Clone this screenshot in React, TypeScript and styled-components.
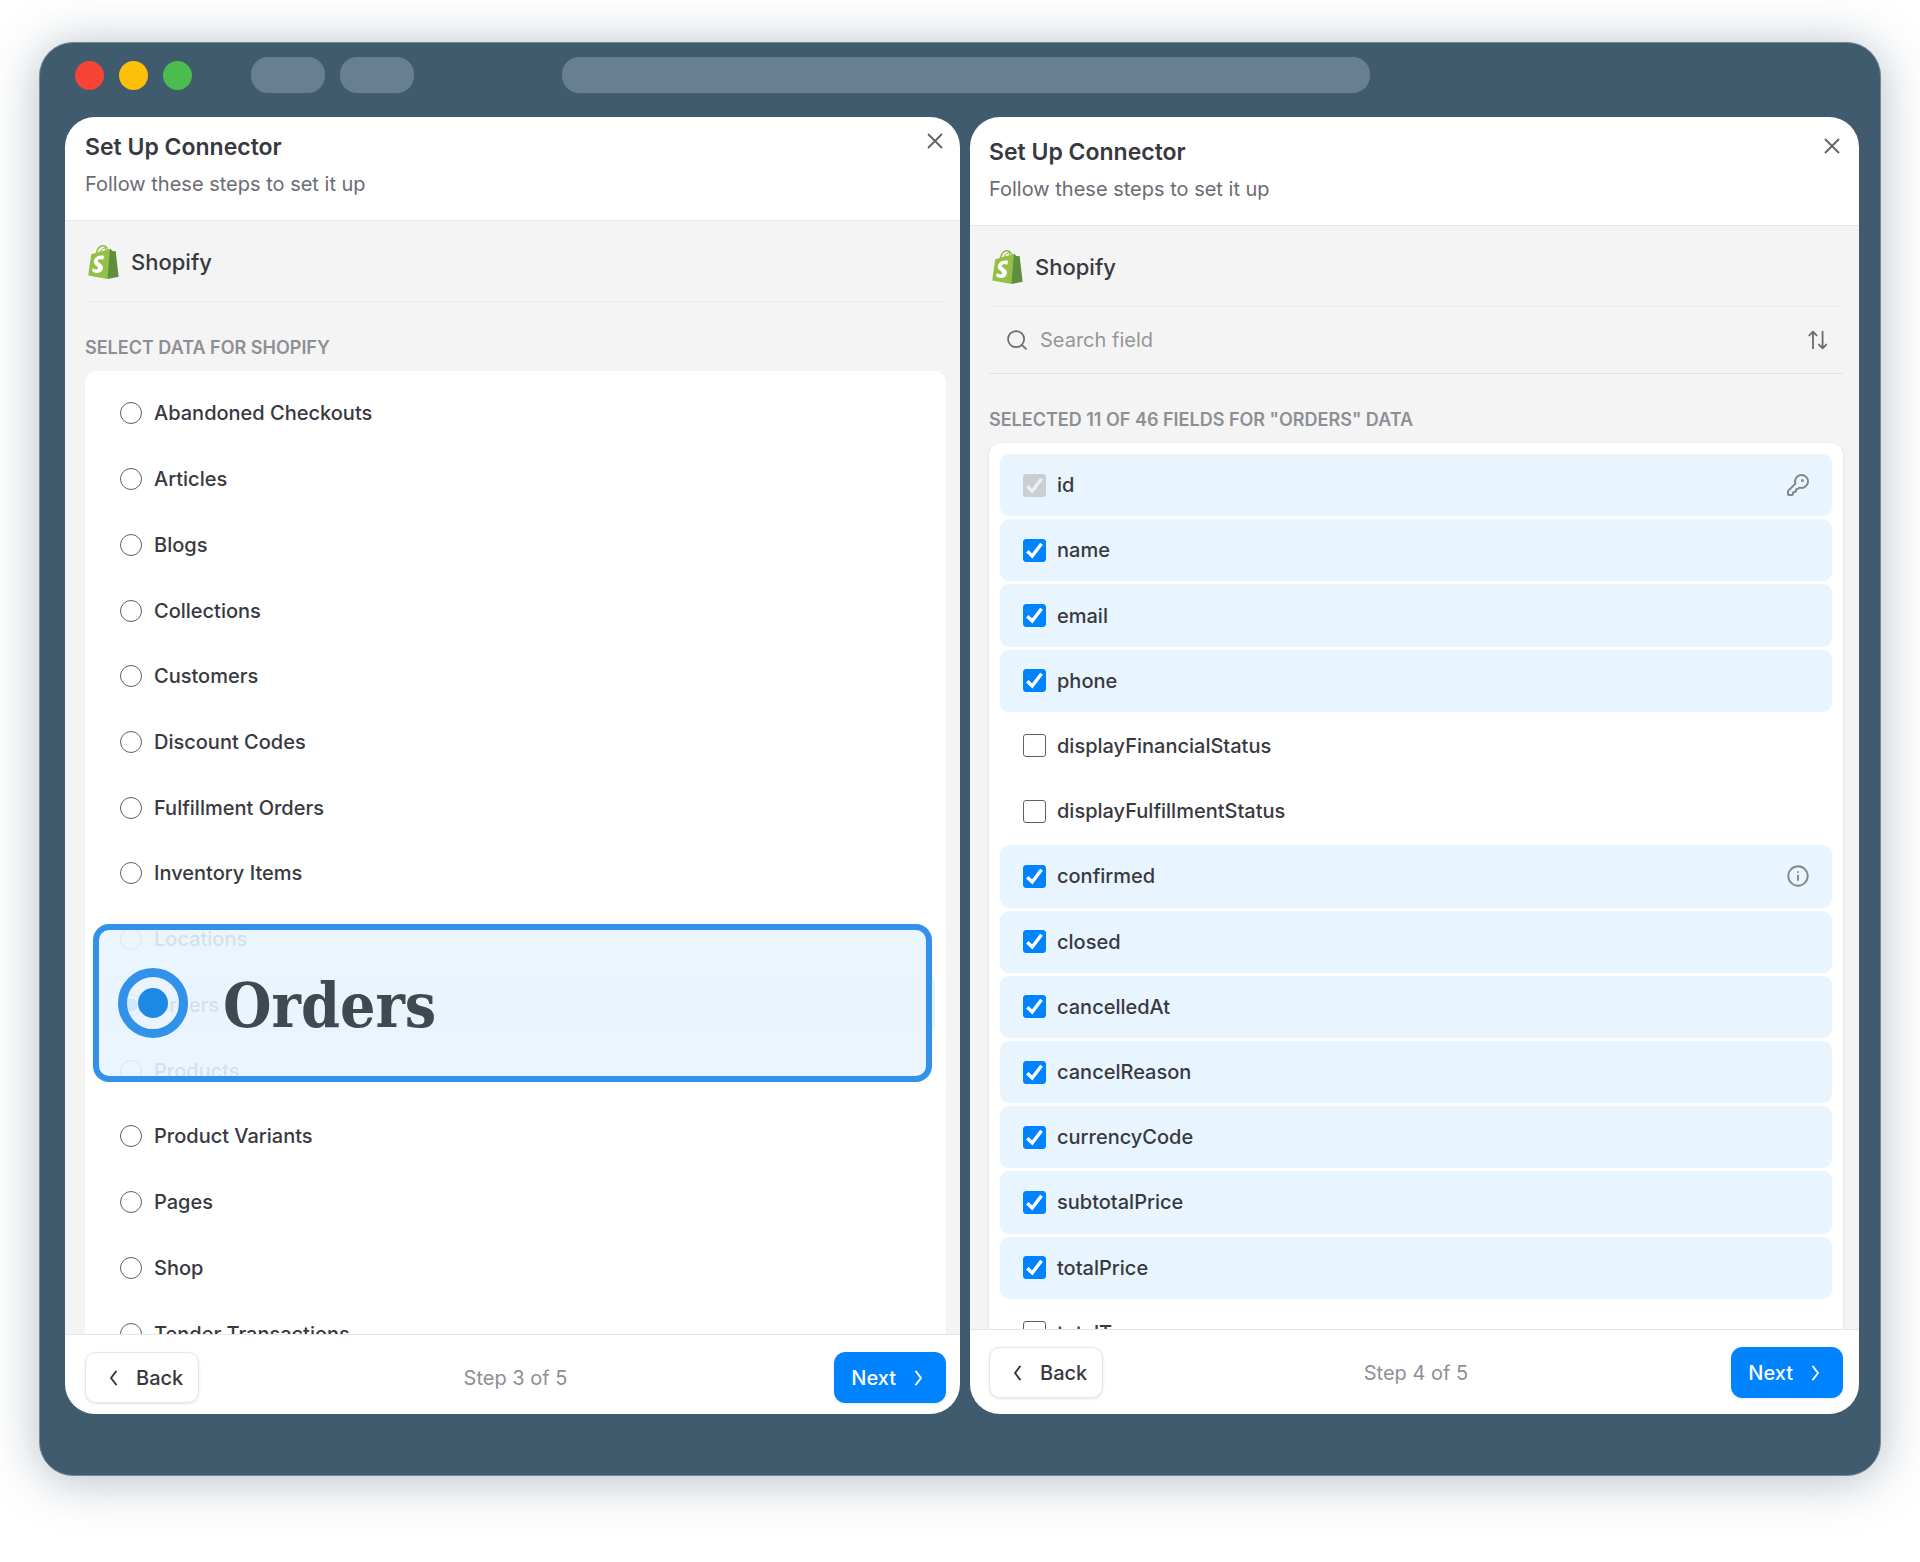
import React from "react";
import styled, { createGlobalStyle, css } from "styled-components";

const GlobalStyle = createGlobalStyle`
  *, *::before, *::after { box-sizing: border-box; }
  body {
    margin: 0;
    background: #ffffff;
    color: #38393f;
    font-family: Inter, "Liberation Sans", sans-serif;
    font-size: 20px;
    line-height: 28px;
  }
  h2, h3, p, ul { margin: 0; padding: 0; }
  button, input { font: inherit; color: inherit; }
`;

const Page = styled.main`
  display: flex;
  height: 100vh;
  padding: 42px 39px 86px;
`;

const Browser = styled.div`
  display: flex;
  flex: 1;
  flex-direction: column;
  min-width: 0;
  padding: 0 21px 61px 25px;
  border: 1px solid #74889a;
  border-radius: 34px;
  background: #405b6d;
  box-shadow: 0 4px 50px rgba(63, 91, 110, 0.4);
`;

const BrowserBar = styled.div`
  display: flex;
  align-items: center;
  height: 74px;
  padding: 0 489px 10px 10px;
`;

const Lights = styled.div`
  display: flex;
  gap: 15px;
  margin-right: 59px;
`;

const Light = styled.span<{ $color: string }>`
  width: 29px;
  height: 29px;
  border-radius: 50%;
  background: ${(p) => p.$color};
`;

const Tabs = styled.div`
  display: flex;
  gap: 15px;
  margin-right: 148px;
`;

const Tab = styled.span`
  width: 74px;
  height: 36px;
  border-radius: 17px;
  background: #687f93;
`;

const AddressBar = styled.span`
  flex: 1;
  height: 36px;
  border-radius: 17px;
  background: #687f93;
`;

const Panels = styled.div`
  display: grid;
  flex: 1;
  grid-template-columns: 895fr 889fr;
  gap: 10px;
  min-height: 0;
`;

const Panel = styled.section`
  display: flex;
  flex-direction: column;
  min-width: 0;
  min-height: 0;
  overflow: hidden;
  border-radius: 30px;
  background: #ffffff;
`;

const PanelHeader = styled.header<{ $roomy?: boolean }>`
  display: flex;
  flex: none;
  align-items: flex-start;
  justify-content: space-between;
  height: ${(p) => (p.$roomy ? 109 : 104)}px;
  padding: ${(p) => (p.$roomy ? "21px 15px 0 19px" : "16px 13px 0 20px")};
  border-bottom: 1px solid #e6e6e8;
`;

const PanelTitle = styled.h2`
  font-size: 23px;
  font-weight: 600;
  line-height: 28px;
`;

const PanelSubtitle = styled.p`
  margin-top: 9px;
  color: #6b6c73;
`;

const CloseButton = styled.button`
  display: flex;
  align-items: center;
  justify-content: center;
  width: 24px;
  height: 16px;
  padding: 0;
  border: 0;
  background: none;
  color: #5f6068;
`;

const PanelBody = styled.div<{ $roomy?: boolean }>`
  display: flex;
  flex: 1;
  flex-direction: column;
  min-height: 0;
  overflow: hidden;
  padding: ${(p) => (p.$roomy ? "0 16px 0 19px" : "0 14px 0 20px")};
  background: #f4f4f4;
`;

const Source = styled.div`
  display: flex;
  flex: none;
  align-items: center;
  gap: 12px;
  height: 81px;
  padding: 1px 0 0 3px;
  border-bottom: 1px solid #e9e9ea;
`;

const SourceName = styled.h3`
  font-size: 22px;
  font-weight: 500;
  line-height: 28px;
`;

const SearchRow = styled.div`
  display: flex;
  flex: none;
  align-items: center;
  gap: 12px;
  height: 67px;
  padding: 0 14px 0 17px;
  border-bottom: 1px solid #e3e3e5;
  color: #6b6c73;
`;

const SearchInput = styled.input`
  flex: 1;
  min-width: 0;
  padding: 0;
  border: 0;
  outline: 0;
  background: none;
  &::placeholder { color: #95969b; opacity: 1; }
`;

const IconButton = styled.button`
  display: flex;
  padding: 0;
  border: 0;
  background: none;
`;

const SectionLabel = styled.h3`
  flex: none;
  padding: 34px 0 11px;
  color: #8e8f94;
  font-size: 18px;
  font-weight: 600;
  line-height: 24px;
`;

const Card = styled.div<{ $raised?: boolean }>`
  position: relative;
  flex: none;
  padding: 11px;
  border-radius: 12px;
  background: #ffffff;
  ${(p) => p.$raised && css`box-shadow: 0 1px 3px rgba(0, 0, 0, 0.12);`}
`;

const List = styled.ul<{ $height: number }>`
  display: grid;
  grid-auto-rows: 1fr;
  gap: 3px;
  height: ${(p) => p.$height}px;
  list-style: none;
`;

const Option = styled.label<{ $selected?: boolean }>`
  display: flex;
  align-items: center;
  gap: 11px;
  height: 100%;
  padding: 0 22px 0 23px;
  border-radius: 9px;
  background: ${(p) => (p.$selected ? "#e8f5ff" : "transparent")};
  font-weight: 500;
`;

const OptionText = styled.span`
  flex: 1;
`;

const OptionIcon = styled.span`
  display: flex;
  color: #85868c;
`;

const Radio = styled.input`
  appearance: none;
  flex: none;
  width: 22px;
  height: 22px;
  margin: 0 1px;
  border: 1px solid #606167;
  border-radius: 50%;
  background: #ffffff;
  &:checked {
    border-color: #0083ff;
    background: radial-gradient(circle, #0083ff 0 6px, #ffffff 7px);
  }
`;

const CheckWrap = styled.span`
  display: grid;
  flex: none;
  & > * { grid-area: 1 / 1; }
`;

const Checkbox = styled.input`
  appearance: none;
  width: 23px;
  height: 23px;
  margin: 0;
  border: 1px solid #606167;
  border-radius: 3px;
  background: #ffffff;
  &:checked { border-color: #0083ff; background: #0083ff; }
  &:checked:disabled { border-color: #cbcfd2; background: #cbcfd2; }
`;

const Callout = styled.label`
  position: absolute;
  top: 553px;
  right: 14px;
  left: 8px;
  display: flex;
  align-items: center;
  gap: 35px;
  height: 158px;
  padding: 0 19px;
  border: 6px solid #3291e9;
  border-radius: 16px;
  background: rgba(232, 244, 255, 0.89);
`;

const CalloutRadio = styled.input`
  appearance: none;
  display: grid;
  flex: none;
  place-items: center;
  width: 70px;
  height: 70px;
  margin: 0;
  border: 9px solid #3291e9;
  border-radius: 50%;
  &::before {
    content: "";
    width: 30px;
    height: 30px;
    border-radius: 50%;
    background: #1e88e5;
  }
`;

const CalloutText = styled.span`
  padding-top: 6px;
  color: #3f4a50;
  font-family: "DejaVu Serif Condensed", "DejaVu Serif", serif;
  font-size: 62px;
  font-weight: 700;
  line-height: 72px;
`;

const PanelFooter = styled.footer<{ $roomy?: boolean }>`
  display: grid;
  flex: none;
  grid-template-columns: 1fr auto 1fr;
  align-items: center;
  padding: ${(p) => (p.$roomy ? "17px 16px 16px 19px" : "17px 14px 11px 20px")};
  border-top: 1px solid #e6e6e8;
`;

const StepText = styled.p`
  color: #8e8f94;
`;

const StepButton = styled.button<{ $primary?: boolean }>`
  display: flex;
  align-items: center;
  justify-self: ${(p) => (p.$primary ? "end" : "start")};
  gap: 10px;
  height: 51px;
  padding: 0 15px 0 16px;
  border: 1px solid ${(p) => (p.$primary ? "#0083ff" : "#e6e6e8")};
  border-radius: 11px;
  background: ${(p) => (p.$primary ? "#0083ff" : "#ffffff")};
  box-shadow: 0 1px 3px rgba(0, 0, 0, 0.1);
  color: ${(p) => (p.$primary ? "#ffffff" : "#38393f")};
  font-weight: 500;
`;

const Stroke = ({ size, width = 2, children }: { size: number; width?: number; children: React.ReactNode }) => (
  <svg width={size} height={size} viewBox="0 0 24 24" fill="none" stroke="currentColor" strokeWidth={width}
    strokeLinecap="round" strokeLinejoin="round" aria-hidden="true">
    {children}
  </svg>
);

const CloseIcon = () => <Stroke size={24} width={1.8}><path d="M5.5 5.5l13 13M18.5 5.5l-13 13" /></Stroke>;
const SearchIcon = () => <Stroke size={22} width={1.9}><circle cx="11" cy="11" r="8.8" /><path d="M17.5 17.5L21.8 21.8" /></Stroke>;
const SortIcon = () => (
  <Stroke size={22} width={2}><path d="M6.5 21V3M2.5 7L6.500 3L10.5 7M17 3v18M13 17l4 4l4-4" /></Stroke>
);
const KeyIcon = () => (
  <Stroke size={24} width={2}>
    <path d="M2.586 17.414A2 2 0 0 0 2 18.828V21a1 1 0 0 0 1 1h3a1 1 0 0 0 1-1v-1a1 1 0 0 1 1-1h1a1 1 0 0 0 1-1v-1a1 1 0 0 1 1-1h.172a2 2 0 0 0 1.414-.586l.814-.814a6.500 6.500 0 1 0-4-4z" />
    <circle cx="16.500" cy="7.500" r=".5" fill="currentColor" />
  </Stroke>
);
const InfoIcon = () => (
  <Stroke size={24} width={1.9}><circle cx="12" cy="12" r="9.700" /><path d="M12 11.500v4.500M12 8v.1" /></Stroke>
);
const ChevronLeft = () => <Stroke size={24} width={2}><path d="M14 5.500l-5 6.500l5 6.500" /></Stroke>;
const ChevronRight = () => <Stroke size={24} width={2}><path d="M10 5.500l5 6.500l-5 6.500" /></Stroke>;

const Tick = ({ muted }: { muted?: boolean }) => (
  <svg width="23" height="23" viewBox="0 0 23 23" fill="none" stroke={muted ? "#eef0f1" : "#ffffff"} strokeWidth="3.4" aria-hidden="true">
    <path d="M4.300 12.300L9.200 17L18.500 4.700" />
  </svg>
);

const ShopifyLogo = () => (
  <svg width="31" height="34" viewBox="3 0 104 124" preserveAspectRatio="none" aria-hidden="true">
    <path fill="#95bf47" d="M95.900 23.900c-.1-.6-.6-1-1.100-1-.5 0-9.300-.2-9.300-.2s-7.400-7.200-8.100-7.900c-.7-.7-2.200-.5-2.700-.3L71 15.600c-.6-2-1.500-4.400-2.800-6.800C64.300 2.900 59.200 0 53.300 0 43.100 0 33 8.200 28.700 29.100l-11.500 3.600c-3.200 1-3.300 1.100-3.700 4.100L3.700 111.600l64.900 12.200z" />
    <path fill="#5e8e3e" d="M94.800 22.900c-.5 0-9.300-.2-9.300-.2s-7.400-7.200-8.100-7.900c-.3-.3-.6-.4-1-.5l-7.800 109.500 37.500-8.100S96 24.300 95.900 23.900c-.1-.6-.6-1-1.100-1z" />
    <path fill="#f4f4f4" d="M34.500 27.300C38 13.500 46 5.500 53.300 5.500c2.500 0 4.300 1.200 5.800 3.400C50 11.500 45 17 42 25zM46.800 23.500c2.600-6.500 6.700-10.500 13.600-10.600.6 2 .9 4.400.9 6.200zM65 10.500c1.500 2 2.100 4.200 2.600 6.200l-3 .9c0-2.700-.2-5-.6-7.300z" />
    <path fill="#ffffff" d="M58 39.900l-4.800 14.300s-4.200-2.300-9.400-2.300c-7.600 0-7.900 4.800-7.900 6 0 6.500 17 9 17 24.400 0 12-7.600 19.800-17.900 19.800-12.400 0-18.700-7.700-18.700-7.700l3.300-10.900s6.500 5.600 12 5.600c3.600 0 5-2.800 5-4.900 0-8.500-13.900-8.900-13.900-22.900 0-11.800 8.400-23.200 25.500-23.200 6.700 0 9.800 1.800 9.800 1.800z" />
  </svg>
);

const datasets = [
  "Abandoned Checkouts", "Articles", "Blogs", "Collections", "Customers", "Discount Codes",
  "Fulfillment Orders", "Inventory Items", "Locations", "Orders", "Products", "Product Variants",
  "Pages", "Shop", "Tender Transactions",
];

type Field = { name: string; checked?: boolean; locked?: boolean; icon?: React.ReactNode };

const fields: Field[] = [
  { name: "id", checked: true, locked: true, icon: <KeyIcon /> },
  { name: "name", checked: true },
  { name: "email", checked: true },
  { name: "phone", checked: true },
  { name: "displayFinancialStatus" },
  { name: "displayFulfillmentStatus" },
  { name: "confirmed", checked: true, icon: <InfoIcon /> },
  { name: "closed", checked: true },
  { name: "cancelledAt", checked: true },
  { name: "cancelReason", checked: true },
  { name: "currencyCode", checked: true },
  { name: "subtotalPrice", checked: true },
  { name: "totalPrice", checked: true },
  { name: "totalTax" },
];

type SetupPanelProps = { roomy?: boolean; step: number; children: React.ReactNode };

const SetupPanel = ({ roomy, step, children }: SetupPanelProps) => (
  <Panel>
    <PanelHeader $roomy={roomy}>
      <div>
        <PanelTitle>Set Up Connector</PanelTitle>
        <PanelSubtitle>Follow these steps to set it up</PanelSubtitle>
      </div>
      <CloseButton type="button" aria-label="Close"><CloseIcon /></CloseButton>
    </PanelHeader>
    <PanelBody $roomy={roomy}>
      <Source>
        <ShopifyLogo />
        <SourceName>Shopify</SourceName>
      </Source>
      {children}
    </PanelBody>
    <PanelFooter $roomy={roomy}>
      <StepButton type="button"><ChevronLeft />Back</StepButton>
      <StepText>Step {step} of 5</StepText>
      <StepButton type="button" $primary>Next<ChevronRight /></StepButton>
    </PanelFooter>
  </Panel>
);

export default function App() {
  return (
    <>
      <GlobalStyle />
      <Page>
        <Browser>
          <BrowserBar>
            <Lights>
              <Light $color="#f64437" />
              <Light $color="#fcc00a" />
              <Light $color="#4abd4e" />
            </Lights>
            <Tabs><Tab /><Tab /></Tabs>
            <AddressBar />
          </BrowserBar>
          <Panels>
            <SetupPanel step={3}>
              <SectionLabel>SELECT DATA FOR SHOPIFY</SectionLabel>
              <Card>
                <List $height={983}>
                  {datasets.map((name) => (
                    <li key={name}>
                      <Option $selected={name === "Orders"}>
                        <Radio type="radio" name="dataset" defaultChecked={name === "Orders"} />
                        <OptionText>{name}</OptionText>
                      </Option>
                    </li>
                  ))}
                </List>
                <Callout>
                  <CalloutRadio type="radio" name="callout" defaultChecked />
                  <CalloutText>Orders</CalloutText>
                </Callout>
              </Card>
            </SetupPanel>
            <SetupPanel roomy step={4}>
              <SearchRow>
                <SearchIcon />
                <SearchInput type="text" placeholder="Search field" aria-label="Search field" />
                <IconButton type="button" aria-label="Sort fields"><SortIcon /></IconButton>
              </SearchRow>
              <SectionLabel>SELECTED 11 OF 46 FIELDS FOR "ORDERS" DATA</SectionLabel>
              <Card $raised>
                <List $height={910}>
                  {fields.map((field) => (
                    <li key={field.name}>
                      <Option $selected={field.checked}>
                        <CheckWrap>
                          <Checkbox type="checkbox" defaultChecked={field.checked} disabled={field.locked} />
                          {field.checked && <Tick muted={field.locked} />}
                        </CheckWrap>
                        <OptionText>{field.name}</OptionText>
                        {field.icon && <OptionIcon>{field.icon}</OptionIcon>}
                      </Option>
                    </li>
                  ))}
                </List>
              </Card>
            </SetupPanel>
          </Panels>
        </Browser>
      </Page>
    </>
  );
}
